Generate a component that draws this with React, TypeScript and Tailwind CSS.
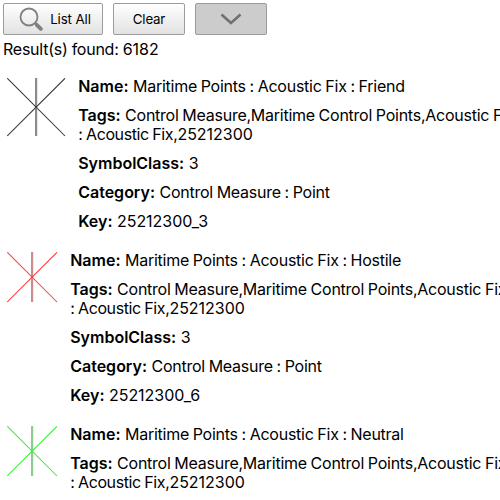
import React from "react";

type Result = {
  affiliation: string;
  keyId: string;
  line: string;
  stem: string;
  size: number;
};

const results: Result[] = [
  { affiliation: "Friend", keyId: "25212300_3", line: "#333333", stem: "#8c8c8c", size: 58 },
  { affiliation: "Hostile", keyId: "25212300_6", line: "#ff3c3c", stem: "#cc8c8c", size: 50 },
  { affiliation: "Neutral", keyId: "25212300_5", line: "#33f033", stem: "#8ccc8c", size: 50 },
];

function AcousticFix({ line, stem, size }: { line: string; stem: string; size: number }) {
  const c = size / 2;
  return (
    <svg width={size + 1} height={size + 1} viewBox={`0 0 ${size + 1} ${size + 1}`} className="ml-[7px] mt-px shrink-0">
      <path d={`M0.3 0.3L${size} ${size}M${size} 0.3L0.3 ${size}`} stroke={line} strokeWidth="1.05" fill="none" />
      <rect x={c - 1} y="0" width="2.2" height={size} fill={stem} />
      <circle cx={c} cy={c} r="1.2" fill={line} />
    </svg>
  );
}

function Digits({ children }: { children: React.ReactNode }) {
  return <span className="tracking-[-0.02px]">{children}</span>;
}

function Field({ label, children }: { label: string; children: React.ReactNode }) {
  return (
    <p className="mb-[10px]">
      <b className="mr-[0.7px] font-semibold tracking-normal">{label}:</b> {children}
    </p>
  );
}

export default function App() {
  const button = "flex h-8 items-center justify-center rounded-[2px] border border-[#9b9b9b] text-[13.3px] font-normal tracking-normal";
  return (
    <div className="h-[500px] w-[500px] overflow-hidden bg-white font-['Inter','Liberation_Sans',sans-serif] text-[16px] leading-[19px] font-normal tracking-[-0.25px] [word-spacing:-0.5px] text-black [font-feature-settings:'calt'_0]">
      <header className="flex gap-[10px] pl-[3px] pt-[3px]">
        <button className={`${button} w-[100px] gap-[7px] bg-linear-to-b from-white to-[#e2e2e2]`}>
          <svg width="24" height="24" viewBox="0 0 24 24" fill="none" stroke="#808080" className="ml-[4px]">
            <circle cx="10" cy="10" r="8.5" strokeWidth="1.8" />
            <path d="M15.8 15.8L18 18" strokeWidth="2" />
            <path d="M17.8 17.8L21.8 21.8" strokeWidth="3.8" strokeLinecap="round" />
          </svg>
          <span className="tracking-[-0.1px]">List All</span>
        </button>
        <button className={`${button} w-[72px] bg-linear-to-b from-white to-[#e2e2e2]`}>
          <span className="tracking-[-0.2px]">Clear</span>
        </button>
        <button className={`${button} w-[72px] bg-[#cccccc]`}>
          <svg width="22" height="12" viewBox="0 0 22 12" fill="none" stroke="#707070" strokeWidth="2.6">
            <path d="M1.5 1.5L11 10L20.5 1.5" />
          </svg>
        </button>
      </header>
      <div className="mt-[5px] pl-[3px] [word-spacing:-0.1px]">
        Result(s) found: <Digits>6182</Digits>
      </div>
      <main className="mt-[18px]">
        {results.map((r) => (
          <section key={r.keyId} className="flex h-[174px]">
            <AcousticFix line={r.line} stem={r.stem} size={r.size} />
            <div className="ml-[12.2px] whitespace-nowrap">
              <Field label="Name">Maritime Points : Acoustic Fix : {r.affiliation}</Field>
              <Field label="Tags">
                Control Measure,Maritime Control Points,Acoustic Fix
                <br />
                <span className="tracking-[-0.4px]">: Acoustic Fix,</span>
                <Digits>25212300</Digits>
              </Field>
              <Field label="SymbolClass">3</Field>
              <Field label="Category">Control Measure : Point</Field>
              <Field label="Key">
                <Digits>{r.keyId}</Digits>
              </Field>
            </div>
          </section>
        ))}
      </main>
    </div>
  );
}
